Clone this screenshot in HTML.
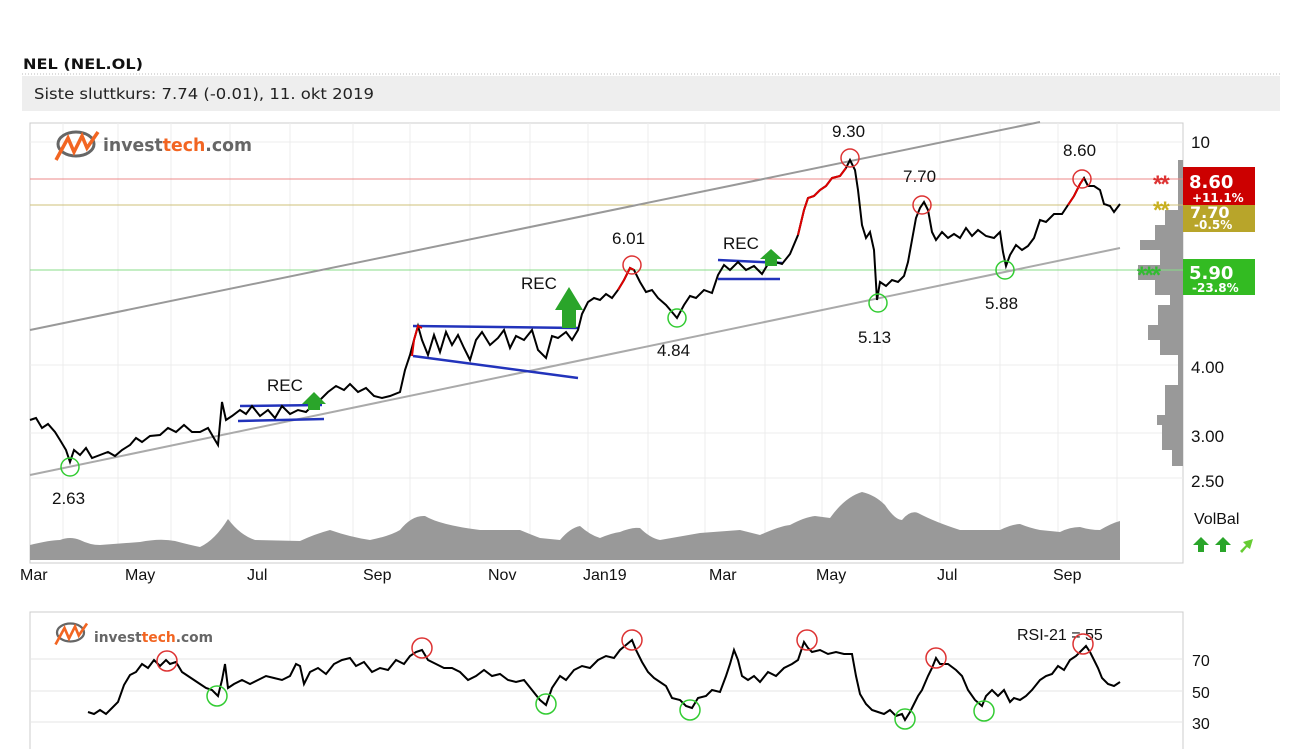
<!DOCTYPE html>
<html><head><meta charset="utf-8"><style>
body{margin:0;background:#fff;width:1305px;height:749px;overflow:hidden;font-family:"Liberation Sans",Verdana,sans-serif}
svg text{font-family:"Liberation Sans",sans-serif}
svg text.dv{font-family:"DejaVu Sans",sans-serif}
</style></head><body>
<svg width="1305" height="749" xmlns="http://www.w3.org/2000/svg">
<text class="dv" x="23" y="69" font-size="14" font-weight="bold" fill="#111" textLength="120" lengthAdjust="spacingAndGlyphs">NEL (NEL.OL)</text>
<line x1="22" y1="74" x2="1280" y2="74" stroke="#bbb" stroke-dasharray="1,2"/>
<rect x="22" y="76" width="1258" height="35" fill="#eeeeee"/>
<text class="dv" x="34" y="99" font-size="15" fill="#222" textLength="340" lengthAdjust="spacingAndGlyphs">Siste sluttkurs: 7.74 (-0.01), 11. okt 2019</text>

<rect x="30" y="123" width="1153" height="440" fill="#fff" stroke="#ccc"/>
<g stroke="#ececec" stroke-width="1">
<line x1="63" y1="123" x2="63" y2="560"/><line x1="118" y1="123" x2="118" y2="560"/><line x1="171" y1="123" x2="171" y2="560"/><line x1="230" y1="123" x2="230" y2="560"/><line x1="290" y1="123" x2="290" y2="560"/><line x1="353" y1="123" x2="353" y2="560"/><line x1="410" y1="123" x2="410" y2="560"/><line x1="470" y1="123" x2="470" y2="560"/><line x1="530" y1="123" x2="530" y2="560"/><line x1="588" y1="123" x2="588" y2="560"/><line x1="648" y1="123" x2="648" y2="560"/><line x1="705" y1="123" x2="705" y2="560"/><line x1="765" y1="123" x2="765" y2="560"/><line x1="822" y1="123" x2="822" y2="560"/><line x1="882" y1="123" x2="882" y2="560"/><line x1="940" y1="123" x2="940" y2="560"/><line x1="1000" y1="123" x2="1000" y2="560"/><line x1="1058" y1="123" x2="1058" y2="560"/><line x1="1117" y1="123" x2="1117" y2="560"/>
<line x1="30" y1="142" x2="1183" y2="142"/><line x1="30" y1="365" x2="1183" y2="365"/><line x1="30" y1="433" x2="1183" y2="433"/><line x1="30" y1="478" x2="1183" y2="478"/>
</g>
<g transform="translate(54,130)">
<ellipse cx="22" cy="14" rx="18" ry="12" fill="none" stroke="#666" stroke-width="3"/>
<path d="M2 30 L14 8 L20 22 L28 6 L33 18 L44 2" fill="none" stroke="#f26522" stroke-width="3.5"/>
</g>
<text class="dv" x="103" y="151" font-size="18" font-weight="bold" fill="#666" textLength="149" lengthAdjust="spacingAndGlyphs">invest<tspan fill="#f26522">tech</tspan>.com</text>

<path d="M30 560 L30 545 Q50 540 60 540 Q70 536 80 540 Q90 545 100 545 L140 542 Q160 538 175 541 Q190 545 200 547 Q215 540 228 519 Q240 535 255 540 L300 541 Q315 534 330 530 Q350 537 370 540 Q390 536 400 530 Q412 515 425 516 Q440 525 480 530 L520 530 Q532 535 540 538 L560 540 Q570 528 580 526 Q590 535 600 538 Q612 533 620 532 Q632 527 640 528 Q650 538 660 540 L700 533 L740 530 Q752 533 760 535 Q780 526 790 525 Q805 517 815 516 L830 518 Q845 497 862 492 Q875 495 885 505 Q895 520 902 520 Q910 510 918 513 Q935 522 960 530 L1000 530 Q1012 524 1020 524 Q1030 528 1040 530 L1060 532 Q1070 527 1080 527 Q1090 530 1100 530 Q1112 523 1120 521 L1120 560 Z" fill="#999"/>
<path d="M1183 160 L1178 160 L1178 210 L1165 210 L1165 225 L1155 225 L1155 240 L1140 240 L1140 250 L1160 250 L1160 265 L1138 265 L1138 280 L1155 280 L1155 295 L1170 295 L1170 305 L1158 305 L1158 325 L1148 325 L1148 340 L1160 340 L1160 355 L1178 355 L1178 385 L1165 385 L1165 415 L1157 415 L1157 425 L1162 425 L1162 450 L1172 450 L1172 466 L1183 466 Z" fill="#999"/>

<line x1="30" y1="179" x2="1183" y2="179" stroke="#e88" stroke-width="1"/>
<line x1="30" y1="205" x2="1183" y2="205" stroke="#cfc07a" stroke-width="1"/>
<line x1="30" y1="270" x2="1183" y2="270" stroke="#8d8" stroke-width="1"/>
<line x1="30" y1="330" x2="1040" y2="122" stroke="#999" stroke-width="2"/>
<line x1="30" y1="475" x2="1120" y2="248" stroke="#aaa" stroke-width="2"/>
<g stroke="#2233bb" stroke-width="2.5">
<line x1="240" y1="406" x2="322" y2="405"/><line x1="238" y1="421" x2="324" y2="419"/>
<line x1="413" y1="326" x2="578" y2="328"/><line x1="413" y1="356" x2="578" y2="378"/>
<line x1="718" y1="260" x2="782" y2="263"/><line x1="718" y1="279" x2="780" y2="279"/>
</g>
<polyline fill="none" stroke="#000" stroke-width="2" points="30,420 36,418 42,428 48,424 55,432 60,440 66,450 70,462 74,450 80,455 86,448 92,458 100,455 108,452 115,456 122,450 130,445 136,438 142,442 150,436 160,435 168,428 176,432 184,425 192,432 200,432 208,428 215,440 218,445 222,402 226,420 232,416 240,410 246,414 252,406 260,416 268,410 275,418 282,406 290,414 298,410 306,412 314,404 320,400 328,392 336,386 344,390 350,384 358,392 366,388 374,396 382,398 390,396 400,392 405,370 410,355 414,340 418,326 422,340 428,355 434,335 440,352 446,332 452,345 458,335 464,348 470,360 476,340 482,332 490,345 498,338 504,330 510,348 516,336 524,340 532,330 538,350 546,358 552,336 558,338 566,332 572,340 578,330 582,314 588,302 594,298 600,300 606,294 612,298 618,290 624,280 630,268 634,270 640,282 646,292 652,290 658,298 666,305 672,312 677,318 684,305 690,296 696,298 704,290 712,293 718,275 724,265 730,270 738,262 746,270 754,266 762,274 768,264 776,262 782,264 790,254 798,235 804,210 808,198 814,196 820,190 826,186 832,178 840,176 846,168 850,160 855,170 858,190 862,225 866,238 870,232 874,250 877,300 880,282 886,286 892,280 898,282 904,276 908,262 912,240 916,218 920,208 924,202 928,210 932,232 936,240 942,232 948,238 954,234 960,238 966,228 972,236 978,230 986,236 994,238 1000,232 1003,252 1006,266 1010,255 1016,245 1022,250 1028,246 1034,238 1040,220 1046,222 1054,214 1062,214 1068,205 1074,196 1080,184 1084,178 1088,186 1094,186 1100,190 1104,204 1110,206 1114,212 1120,204"/>
<polyline fill="none" stroke="#d00" stroke-width="2" points="412,356 414,340 418,326 422,328"/>
<polyline fill="none" stroke="#d00" stroke-width="2" points="618,290 624,280 630,268 634,270"/>
<polyline fill="none" stroke="#d00" stroke-width="2" points="798,235 804,210 808,198 814,196 820,190 826,186 832,178 840,176 846,168"/>
<polyline fill="none" stroke="#d00" stroke-width="2" points="1068,205 1074,196 1080,184 1084,178"/>
<path d="M302 404 L314 392 L326 404 L320 404 L320 410 L308 410 L308 404 Z" fill="#2aa52a"/>
<path d="M555 310 L569 287 L583 310 L576 310 L576 328 L562 328 L562 310 Z" fill="#2aa52a"/>
<path d="M760 259 L771 249 L782 259 L777 259 L777 266 L765 266 L765 259 Z" fill="#2aa52a"/>
<g fill="none" stroke-width="1.5">
<circle cx="70" cy="467" r="9" stroke="#3c3"/><circle cx="677" cy="318" r="9" stroke="#3c3"/><circle cx="878" cy="303" r="9" stroke="#3c3"/><circle cx="1005" cy="270" r="9" stroke="#3c3"/>
<circle cx="632" cy="265" r="9" stroke="#d33"/><circle cx="850" cy="158" r="9" stroke="#d33"/><circle cx="922" cy="205" r="9" stroke="#d33"/><circle cx="1082" cy="179" r="9" stroke="#d33"/>
</g>
<g font-size="17" fill="#111">
<text x="52" y="504">2.63</text><text x="612" y="244">6.01</text><text x="657" y="356">4.84</text><text x="832" y="137">9.30</text><text x="903" y="182">7.70</text><text x="858" y="343">5.13</text><text x="1063" y="156">8.60</text><text x="985" y="309">5.88</text>
<text x="267" y="391">REC</text><text x="521" y="289">REC</text><text x="723" y="249">REC</text>
</g>
<text x="1153" y="192" font-size="24" fill="#d33" font-weight="bold" letter-spacing="-2">**</text>
<text x="1153" y="218" font-size="24" fill="#c8b020" font-weight="bold" letter-spacing="-2">**</text>
<text x="1137" y="283" font-size="24" fill="#3b3" font-weight="bold" letter-spacing="-2">***</text>
<g font-size="17" fill="#111">
<text x="1191" y="148">10</text><text x="1191" y="373">4.00</text><text x="1191" y="442">3.00</text><text x="1191" y="487">2.50</text>
<text x="1194" y="524" font-size="16">VolBal</text>
</g>
<rect x="1183" y="205" width="72" height="27" fill="#b8a52a"/>
<text class="dv" x="1190" y="218" font-size="16" font-weight="bold" fill="#fff">7.70</text>
<text class="dv" x="1194" y="229" font-size="12" font-weight="bold" fill="#fff">-0.5%</text>
<rect x="1183" y="167" width="72" height="38" fill="#cc0000"/>
<text class="dv" x="1189" y="188" font-size="18" font-weight="bold" fill="#fff">8.60</text>
<text class="dv" x="1192" y="202" font-size="12" font-weight="bold" fill="#fff">+11.1%</text>
<rect x="1183" y="259" width="72" height="36" fill="#33bb22"/>
<text class="dv" x="1189" y="279" font-size="18" font-weight="bold" fill="#fff">5.90</text>
<text class="dv" x="1192" y="292" font-size="12" font-weight="bold" fill="#fff">-23.8%</text>
<path d="M1193 545 L1201 537 L1209 545 L1204 545 L1204 552 L1198 552 L1198 545 Z" fill="#2aa52a"/>
<path d="M1215 545 L1223 537 L1231 545 L1226 545 L1226 552 L1220 552 L1220 545 Z" fill="#2aa52a"/>
<path d="M1240 551 L1246 545 L1243 542 L1253 539 L1250 549 L1247 547 L1242 553 Z" fill="#6c3"/>
<g font-size="16" fill="#111">
<text x="20" y="580">Mar</text><text x="125" y="580">May</text><text x="247" y="580">Jul</text><text x="363" y="580">Sep</text><text x="488" y="580">Nov</text><text x="583" y="580">Jan19</text><text x="709" y="580">Mar</text><text x="816" y="580">May</text><text x="937" y="580">Jul</text><text x="1053" y="580">Sep</text>
</g>

<rect x="30" y="612" width="1153" height="150" fill="#fff" stroke="#ccc"/>
<g stroke="#e6e6e6"><line x1="30" y1="659" x2="1183" y2="659"/><line x1="30" y1="691" x2="1183" y2="691"/><line x1="30" y1="722" x2="1183" y2="722"/></g>
<g transform="translate(54,622) scale(0.75)">
<ellipse cx="22" cy="14" rx="18" ry="12" fill="none" stroke="#666" stroke-width="3"/>
<path d="M2 30 L14 8 L20 22 L28 6 L33 18 L44 2" fill="none" stroke="#f26522" stroke-width="3.5"/>
</g>
<text class="dv" x="94" y="642" font-size="14" font-weight="bold" fill="#666" textLength="119" lengthAdjust="spacingAndGlyphs">invest<tspan fill="#f26522">tech</tspan>.com</text>
<text x="1017" y="640" font-size="16" fill="#111">RSI-21 = 55</text>
<polyline fill="none" stroke="#000" stroke-width="2" points="88,712 94,714 100,710 106,714 112,708 118,702 124,685 130,675 136,672 142,664 148,668 154,660 160,666 166,660 170,664 176,662 182,672 188,676 194,680 200,684 206,688 212,690 218,696 222,680 225,664 228,688 234,684 242,680 250,684 258,680 266,676 274,678 282,680 290,676 296,664 300,666 304,684 310,672 318,668 326,674 334,664 342,660 350,658 356,666 364,662 372,672 380,668 388,670 396,660 404,664 410,656 416,652 422,650 428,660 436,664 444,668 452,668 460,672 468,680 476,676 484,670 492,676 500,674 508,680 516,682 524,680 532,690 540,700 546,705 552,688 560,676 566,680 574,670 582,666 590,668 598,660 606,656 614,658 620,650 626,645 632,640 636,650 642,662 648,672 654,678 660,682 666,686 672,698 680,700 686,706 692,708 698,698 706,696 712,690 720,692 726,676 730,664 734,650 738,660 742,676 748,680 754,676 760,682 768,672 776,676 784,668 792,664 798,660 804,642 808,648 812,652 820,650 828,654 836,652 844,654 852,654 856,676 860,694 866,704 872,710 878,712 884,714 890,710 896,716 902,714 905,720 910,712 914,704 918,696 922,690 928,676 932,668 936,658 940,664 948,664 956,670 962,676 968,690 975,700 982,706 986,696 992,690 998,696 1004,690 1010,702 1014,698 1020,700 1026,696 1032,690 1040,680 1046,676 1052,674 1058,666 1064,670 1070,660 1076,656 1082,650 1086,646 1090,652 1094,660 1098,668 1102,678 1108,684 1114,686 1120,682"/>
<g fill="none" stroke-width="1.5">
<circle cx="167" cy="661" r="10" stroke="#d33"/><circle cx="422" cy="648" r="10" stroke="#d33"/><circle cx="632" cy="640" r="10" stroke="#d33"/><circle cx="807" cy="640" r="10" stroke="#d33"/><circle cx="936" cy="658" r="10" stroke="#d33"/><circle cx="1083" cy="644" r="10" stroke="#d33"/>
<circle cx="217" cy="696" r="10" stroke="#3c3"/><circle cx="546" cy="704" r="10" stroke="#3c3"/><circle cx="690" cy="710" r="10" stroke="#3c3"/><circle cx="905" cy="719" r="10" stroke="#3c3"/><circle cx="984" cy="711" r="10" stroke="#3c3"/>
</g>
<g font-size="16" fill="#111"><text x="1192" y="666">70</text><text x="1192" y="698">50</text><text x="1192" y="729">30</text></g>
</svg>
</body></html>
